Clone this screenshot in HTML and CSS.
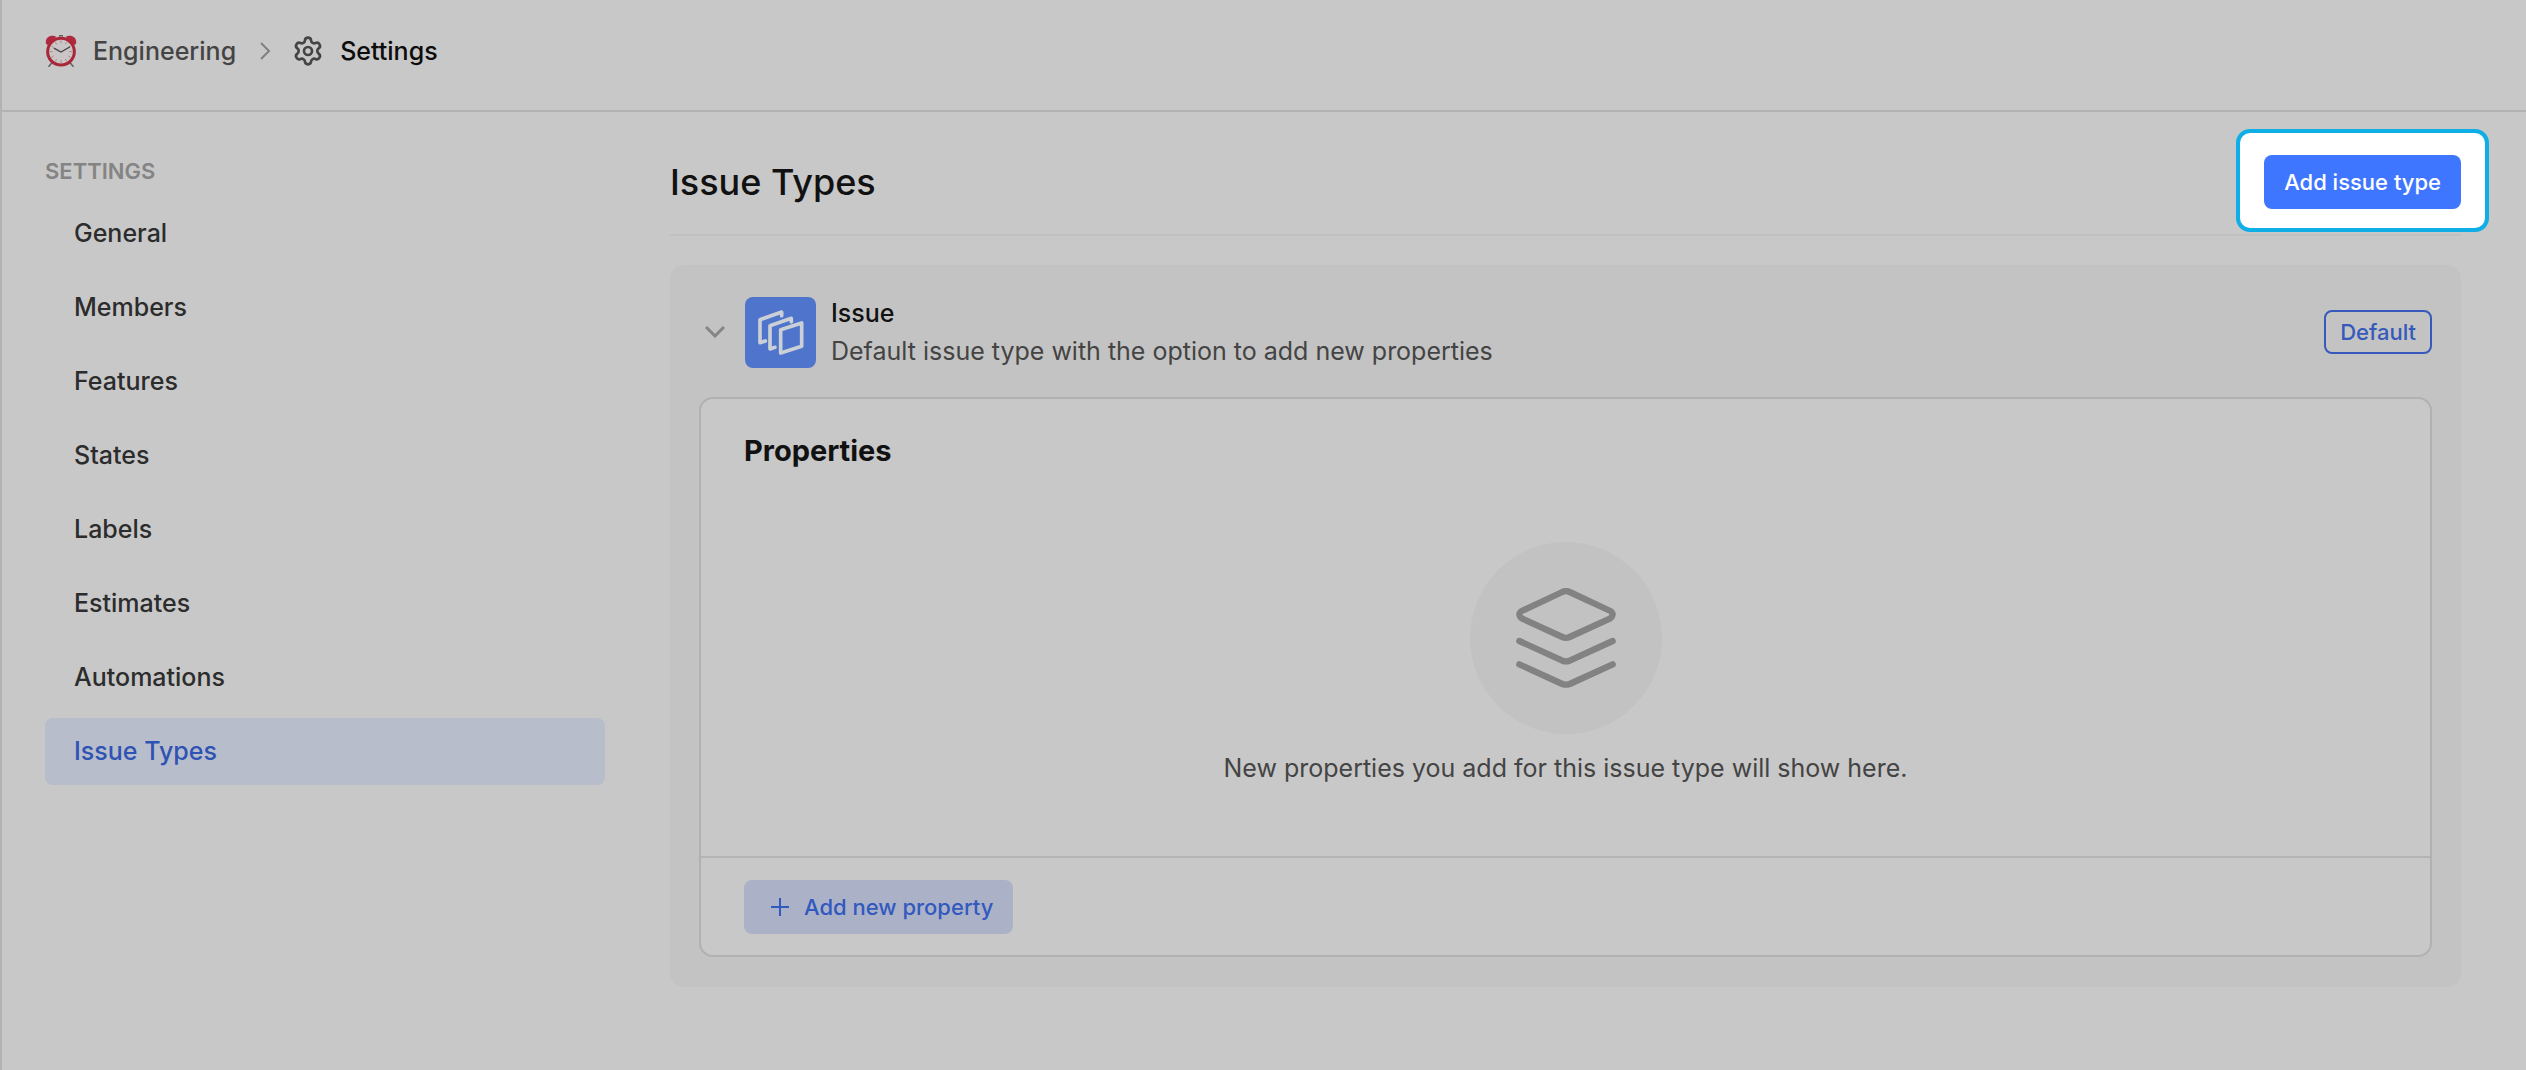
FILE: index.html
```html
<!DOCTYPE html>
<html lang="en">
<head>
<meta charset="utf-8">
<title>Engineering – Settings</title>
<link rel="stylesheet" href="styles.css">
</head>
<body>
<div class="app">
  <header class="topbar">
    <nav class="crumbs" aria-label="Breadcrumb">
      <a class="crumb" href="#">
        <svg class="clock" viewBox="0 0 96 96" aria-hidden="true">
          <path d="M22 82 12 94M74 82 84 94" stroke="#6b6467" stroke-width="5" stroke-linecap="round"/>
          <path d="M3 26C-1 8 16-3 34 5L8 30Z" fill="#b0283f"/>
          <path d="M93 26C97 8 80-3 62 5L88 30Z" fill="#b0283f"/>
          <path d="M44 5V2h8v3" stroke="#6b6467" stroke-width="4" fill="none"/>
          <circle cx="48" cy="50" r="40" fill="#cbc5c6" stroke="#a92738" stroke-width="9"/>
          <g stroke="#a58f93" stroke-width="3"><path d="M48 16v9M48 75v9M14 50h9M73 50h9M31 21l4 7M61 72l4 7M19 33l7 4M70 63l7 4M65 21l-4 7M35 72l-4 7M77 33l-7 4M26 63l-7 4"/></g>
          <path d="M28 40 48 51 74 36" fill="none" stroke="#444" stroke-width="4" stroke-linecap="round"/>
        </svg>
        <span>Engineering</span>
      </a>
      <svg class="crumb-sep" viewBox="0 0 24 24" aria-hidden="true"><path d="m9 4 8 8-8 8"/></svg>
      <a class="crumb current" href="#" aria-current="page">
        <svg class="gear" viewBox="0 0 24 24" aria-hidden="true"><path d="M9.671 4.136a2.34 2.34 0 0 1 4.659 0 2.34 2.34 0 0 0 3.319 1.915 2.34 2.34 0 0 1 2.33 4.033 2.34 2.34 0 0 0 0 3.831 2.34 2.34 0 0 1-2.33 4.033 2.34 2.34 0 0 0-3.319 1.915 2.34 2.34 0 0 1-4.659 0 2.34 2.34 0 0 0-3.32-1.915 2.34 2.34 0 0 1-2.33-4.033 2.34 2.34 0 0 0 0-3.831A2.34 2.34 0 0 1 6.35 6.051a2.34 2.34 0 0 0 3.319-1.915"/><circle cx="12" cy="12" r="3"/></svg>
        <span>Settings</span>
      </a>
    </nav>
  </header>
  <div class="body">
    <aside class="sidebar">
      <h2 class="sidebar-title">SETTINGS</h2>
      <nav class="menu" aria-label="Settings">
        <a class="menu-item" href="#">General</a>
        <a class="menu-item" href="#">Members</a>
        <a class="menu-item" href="#">Features</a>
        <a class="menu-item" href="#">States</a>
        <a class="menu-item" href="#">Labels</a>
        <a class="menu-item" href="#">Estimates</a>
        <a class="menu-item" href="#">Automations</a>
        <a class="menu-item active" href="#" aria-current="page">Issue Types</a>
      </nav>
    </aside>
    <main class="content">
      <div class="page-head">
        <h1 class="page-title">Issue Types</h1>
        <div class="spotlight"><button class="btn primary" type="button">Add issue type</button></div>
      </div>
      <section class="type-card">
        <div class="type-head">
          <button class="toggle" type="button" aria-label="Collapse issue type">
            <svg viewBox="0 0 20 12" aria-hidden="true"><path d="m1 1 9 9 9-9"/></svg>
          </button>
          <svg class="type-icon" viewBox="0 0 213 213" aria-hidden="true">
            <path d="M107 98 170 78V148L107 168Z"/>
            <path d="M139 75V64L75 86V156L90 151"/>
            <path d="M110 56V45L45 68V137L61 132"/>
          </svg>
          <div class="type-text">
            <h3 class="type-name">Issue</h3>
            <p class="type-desc">Default issue type with the option to add new properties</p>
          </div>
          <span class="badge">Default</span>
        </div>
        <div class="panel">
          <div class="panel-body">
            <h4 class="panel-title">Properties</h4>
            <div class="empty">
              <div class="empty-disc">
                <svg class="layers" viewBox="0 0 300 300" aria-hidden="true">
                  <path d="M139 12Q150 7 161 12L283 69Q297 79 283 91L161 147Q150 152 139 147L17 91Q3 79 17 69Z"/>
                  <path d="M10 159 139 218Q150 222 161 218L290 159"/>
                  <path d="M10 229 139 288Q150 292 161 288L290 229"/>
                </svg>
              </div>
              <p class="empty-text">New properties you add for this issue type will show here.</p>
            </div>
          </div>
          <div class="panel-foot">
            <button class="btn soft" type="button">
              <svg class="plus" viewBox="0 0 20 20" aria-hidden="true"><path d="M10 1v18M1 10h18"/></svg>
              <span>Add new property</span>
            </button>
          </div>
        </div>
      </section>
    </main>
  </div>
</div>
</body>
</html>
```
FILE: styles.css
```css
* { box-sizing: border-box; }

body {
  margin: 0;
  background: #c8c8c8;
  color: #111;
  font-family: Inter, "Liberation Sans", sans-serif;
  font-size: 25px;
  line-height: 36px;
}

h1, h2, h3, h4, p { margin: 0; }
a { color: inherit; text-decoration: none; }
button { font: inherit; border: 0; margin: 0; }
svg { display: block; flex: none; fill: none; }

.app { min-height: 100vh; border-left: 2px solid #b2b2b2; }

.topbar {
  padding: 33px 43px 41px;
  border-bottom: 2px solid #b2b2b2;
}
.crumbs, .crumb { display: flex; align-items: center; gap: 16px; }
.crumb { font-weight: 500; color: #444; }
.crumb.current { color: #0c0c0c; }
.clock { width: 32px; height: 32px; }
.crumb-sep { width: 24px; height: 24px; stroke: #808080; stroke-width: 2; }
.gear { width: 32px; height: 32px; stroke: #444; stroke-width: 2; }

.body { display: flex; gap: 65px; padding: 0 65px 83px 43px; }

.sidebar { flex: 0 0 560px; padding-top: 43px; }
.sidebar-title { font-size: 22px; line-height: 32px; font-weight: 600; color: #848484; }
.menu { display: flex; flex-direction: column; gap: 7px; padding-top: 13px; }
.menu-item {
  padding: 16px 29px;
  border-radius: 8px;
  line-height: 35px;
  font-weight: 500;
  color: #2c2c2c;
}
.menu-item.active { background: #b7bdca; color: #2e53b4; }

.content { flex: 1; min-width: 0; }
.page-head {
  display: flex;
  align-items: center;
  justify-content: space-between;
  padding: 43px 0 25px;
  border-bottom: 2px solid #c1c1c1;
}
.page-title { font-size: 36px; line-height: 54px; font-weight: 500; }

.btn {
  display: flex;
  align-items: center;
  border-radius: 8px;
  padding: 9px 20px;
  font-size: 22px;
  font-weight: 500;
}
.primary { background: #3f76ff; color: #fff; }

/* Highlight ring that lifts the button above the dimmed page */
.spotlight { position: relative; z-index: 1; }
.spotlight::before {
  content: "";
  position: absolute;
  z-index: -1;
  inset: -26px -28px -23px;
  background: #fff;
  border: 4px solid #10aee6;
  border-radius: 14px;
}

.type-card {
  margin-top: 29px;
  padding: 30px 29px;
  border-radius: 14px;
  background: #c3c3c3;
}
.type-head { display: flex; align-items: center; padding-bottom: 28px; }
.toggle { padding: 8px 6px; background: none; }
.toggle svg { width: 20px; height: 12px; stroke: #858585; stroke-width: 3; }
.type-icon {
  width: 71px;
  height: 71px;
  margin: 0 15px 0 14px;
  border-radius: 8px;
  background: #4e74cb;
  stroke: #cbcfd6;
  stroke-width: 11;
  stroke-linejoin: round;
  stroke-linecap: round;
}
.type-text { flex: 1; }
.type-name { font-size: 25px; font-weight: 500; }
.type-desc { margin-top: 2px; color: #444; }
.badge {
  padding: 2px 14px;
  border: 2px solid #355abb;
  border-radius: 8px;
  color: #355abb;
  font-size: 22px;
  font-weight: 500;
}

.panel { border: 2px solid #b1b1b1; border-radius: 14px; background: #c8c8c8; }
.panel-body { padding: 34px 43px 70px; }
.panel-title { font-size: 29px; font-weight: 700; }
.empty {
  display: flex;
  flex-direction: column;
  align-items: center;
  gap: 16px;
  padding-top: 73px;
}
.empty-disc {
  display: grid;
  place-items: center;
  width: 192px;
  height: 192px;
  border-radius: 50%;
  background: #c2c2c2;
}
.layers {
  width: 100px;
  height: 100px;
  stroke: #828282;
  stroke-width: 19;
  stroke-linecap: round;
  stroke-linejoin: round;
}
.empty-text { color: #444; text-align: center; }
.panel-foot { padding: 22px 43px 21px; border-top: 2px solid #b4b4b4; }
.soft { gap: 14px; padding-left: 26px; background: #abb2c8; color: #3259bf; }
.plus { width: 20px; height: 20px; stroke: currentColor; stroke-width: 2; }
```
